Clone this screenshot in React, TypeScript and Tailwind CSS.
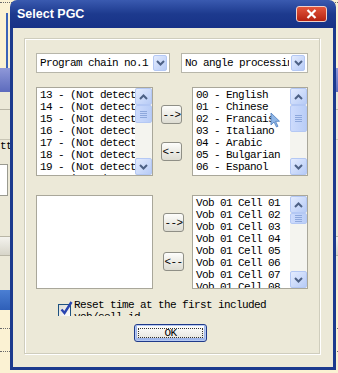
import React from 'react';

const mono = "font-['Liberation_Mono',monospace] text-[11px] tracking-[-0.6px] leading-[12px] text-black";

const Chevron = ({ up }: { up?: boolean }) => (
  <svg width="9" height="6" viewBox="0 0 9 6">
    <path d={up ? 'M1 5 L4.5 1.5 L8 5' : 'M1 1 L4.5 4.5 L8 1'} stroke="#4d6185" strokeWidth="2" fill="none" />
  </svg>
);

const ScrollBtn = ({ up }: { up?: boolean }) => (
  <div className="w-[17px] h-[17px] shrink-0 rounded-[2px] border border-[#b4c8f4] bg-gradient-to-br from-[#e4ecfe] to-[#b7cbf6] flex items-center justify-center">
    <Chevron up={up} />
  </div>
);

const Thumb = ({ cls }: { cls: string }) => (
  <div className={`w-[17px] ${cls} shrink-0 rounded-[2px] border border-[#b4c8f4] bg-gradient-to-r from-[#cddbfc] to-[#b9cdf7] flex flex-col items-center justify-center gap-[1px]`}>
    <div className="w-[7px] h-[1px] bg-[#8ea8dc]" />
    <div className="w-[7px] h-[1px] bg-[#8ea8dc]" />
    <div className="w-[7px] h-[1px] bg-[#8ea8dc]" />
    <div className="w-[7px] h-[1px] bg-[#8ea8dc]" />
  </div>
);

const ScrollBar = ({ thumb }: { thumb: string }) => (
  <div className="w-[17px] h-full flex flex-col bg-[#f4f4ef]">
    <ScrollBtn up />
    <Thumb cls={thumb} />
    <div className="flex-1" />
    <ScrollBtn />
  </div>
);

const ListBox = ({ items, cls, thumb }: { items: string[]; cls: string; thumb?: string }) => (
  <div className={`${cls} shrink-0 border border-[#a9a79a] bg-white flex`}>
    <div className={`flex-1 overflow-hidden pl-[3px] pt-[1px] ${mono} whitespace-nowrap`}>
      {items.map((t, i) => (
        <div key={i} className="h-[12px]">{t}</div>
      ))}
    </div>
    {thumb && <ScrollBar thumb={thumb} />}
  </div>
);

const ArrowBtn = ({ label, cls }: { label: string; cls: string }) => (
  <div className={`w-[21px] h-[19px] ${cls} rounded-[3px] border border-[#8f8f86] bg-gradient-to-b from-[#fdfdfb] to-[#dddcd2] flex items-center justify-center ${mono}`}>
    {label}
  </div>
);

const Combo = ({ text, cls }: { text: string; cls: string }) => (
  <div className={`${cls} h-[20px] shrink-0 border border-[#b7b6aa] bg-white flex items-center pr-[2px]`}>
    <div className={`flex-1 overflow-hidden whitespace-nowrap pl-[3px] ${mono}`}>{text}</div>
    <div className="ml-[2px] w-[14px] h-[16px] rounded-[2px] border border-[#b4c8f4] bg-gradient-to-br from-[#e4ecfe] to-[#b7cbf6] flex items-center justify-center">
      <Chevron />
    </div>
  </div>
);

export default function App() {
  const left = Array.from({ length: 8 }, (_, i) => `${13 + i} - (Not detected)`);
  const langs = ['00 - English', '01 - Chinese', '02 - Francais', '03 - Italiano', '04 - Arabic', '05 - Bulgarian', '06 - Espanol', '07 - German'];
  const cells = Array.from({ length: 9 }, (_, i) => `Vob 01 Cell 0${i + 1}`);

  return (
    <div className="relative w-[338px] h-[373px] overflow-hidden bg-[#fbf2d3]">
      {/* desktop behind the dialog */}
      <div className="absolute left-0 top-[2px] w-[338px] border-t border-dotted border-[#6b6b6b]" />
      <div className="absolute left-[6px] top-[13px] w-[2px] h-[55px] bg-[#3b63b8]" />
      <div className="absolute left-[-200px] top-[68px] w-[740px] h-[222px] bg-[#ece9d8] flex flex-col">
        <div className="h-[24px] bg-gradient-to-b from-[#8f98d8] to-[#5d6bbd]" />
        <div className="h-[18px] border-b border-[#b9b6a6]" />
        <div className="h-[30px] border-b border-[#c9c6b6]" />
        <div className={`h-[24px] pl-[200px] ${mono}`}>tt</div>
        <div className="h-[32px] ml-[180px] w-[28px] border border-[#9a9a90] bg-white" />
        <div className="h-[40px]" />
        <div className="h-[20px] bg-gradient-to-b from-[#f4f3ee] to-[#d7d5c9] border-y border-[#b9b6a6]" />
      </div>
      <div className="absolute left-0 top-[290px] w-[12px] h-[20px] bg-gradient-to-b from-[#4b7fd3] to-[#2f5fb8]" />
      <div className="absolute left-0 top-[328px] w-[338px] border-t border-dotted border-[#6b6b6b]" />
      <div className="absolute left-0 top-[351px] w-[338px] border-t border-dotted border-[#6b6b6b]" />

      {/* dialog window */}
      <div className="absolute left-[10px] top-0 w-[326px] h-[370px] rounded-t-[7px] overflow-hidden flex flex-col">
        <div className="h-[28px] shrink-0 bg-gradient-to-b from-[#3a5ab0] via-[#1d3a8e] to-[#173187] flex items-center pl-[7px] pr-[9px]">
          <div className="flex-1 font-['Liberation_Sans',sans-serif] font-bold text-[12.5px] text-white">Select PGC</div>
          <div className="w-[31px] h-[16px] rounded-[3px] border border-[#f0d0c8] bg-gradient-to-b from-[#e4553b] to-[#b4200f] flex items-center justify-center">
            <svg width="11" height="10" viewBox="0 0 11 10">
              <path d="M1.5 1 L9.5 9 M9.5 1 L1.5 9" stroke="white" strokeWidth="2.2" />
            </svg>
          </div>
        </div>
        <div className="flex-1 flex flex-col border-x-[3px] border-b-[3px] border-[#1c3a8e] bg-[#ece9d8] pl-[11px] pr-[13px] pt-[10px] pb-[13px]">
          <div className="flex-1 flex flex-col border border-[#cfcdbd] shadow-[inset_1px_1px_0_#ffffff,1px_1px_0_#ffffff] pl-[11px] pt-[14px]">
            <div className="flex gap-[11px]">
              <Combo text="Program chain no.1" cls="w-[134px]" />
              <Combo text="No angle processing" cls="w-[127px]" />
            </div>

            <div className="flex mt-[14px] h-[89px]">
              <ListBox items={left} cls="w-[117px] h-[89px]" thumb="h-[18px]" />
              <div className="ml-[8px] flex flex-col">
                <ArrowBtn label="-->" cls="mt-[18px]" />
                <ArrowBtn label="<--" cls="mt-[18px]" />
              </div>
              <ListBox items={langs} cls="ml-[10px] w-[116px] h-[89px]" thumb="h-[27px]" />
            </div>

            <div className="flex mt-[19px] h-[94px]">
              <ListBox items={[]} cls="w-[117px] h-[94px]" />
              <div className="ml-[10px] flex flex-col">
                <ArrowBtn label="-->" cls="mt-[18px]" />
                <ArrowBtn label="<--" cls="mt-[20px]" />
              </div>
              <ListBox items={cells} cls="ml-[8px] w-[116px] h-[94px]" thumb="h-[11px]" />
            </div>

            <div className="flex mt-[10px] ml-[22px] h-[17px] overflow-hidden">
              <div className="relative mt-[5px] w-[13px] h-[13px] shrink-0 border border-[#1c5180] bg-gradient-to-br from-[#dcdbd5] to-[#ffffff]">
                <svg className="absolute left-[1px] top-[-4px] overflow-visible" width="13" height="15" viewBox="0 0 13 15">
                  <path d="M1.5 8.5 L4.5 12 L11.5 1" stroke="#2a45b0" strokeWidth="2.4" fill="none" />
                </svg>
              </div>
              <div className={`ml-[3px] ${mono}`}>
                Reset time at the first included<br />vob/cell id
              </div>
            </div>

            <div className="mt-[8px] ml-[98px] w-[73px] h-[18px] rounded-[3px] border border-[#1f3a8a] bg-gradient-to-b from-[#ffffff] to-[#e2e1da] shadow-[inset_0_0_0_1px_#b6c9f2,inset_0_-1px_0_2px_#9fb6ea] p-[3px]">
              <div className={`h-full border border-dotted border-[#333] flex items-center justify-center ${mono}`}>OK</div>
            </div>
          </div>
        </div>
      </div>

      {/* mouse pointer */}
      <svg className="absolute left-[270px] top-[112px]" width="10" height="16" viewBox="0 0 10 16">
        <path d="M1 1 L1 13 L4 10 L6.5 15 L8 14.3 L5.6 9.4 L9.5 9.2 Z" fill="#8fb6e6" stroke="#4f7fbf" strokeWidth="0.8" />
      </svg>
    </div>
  );
}
